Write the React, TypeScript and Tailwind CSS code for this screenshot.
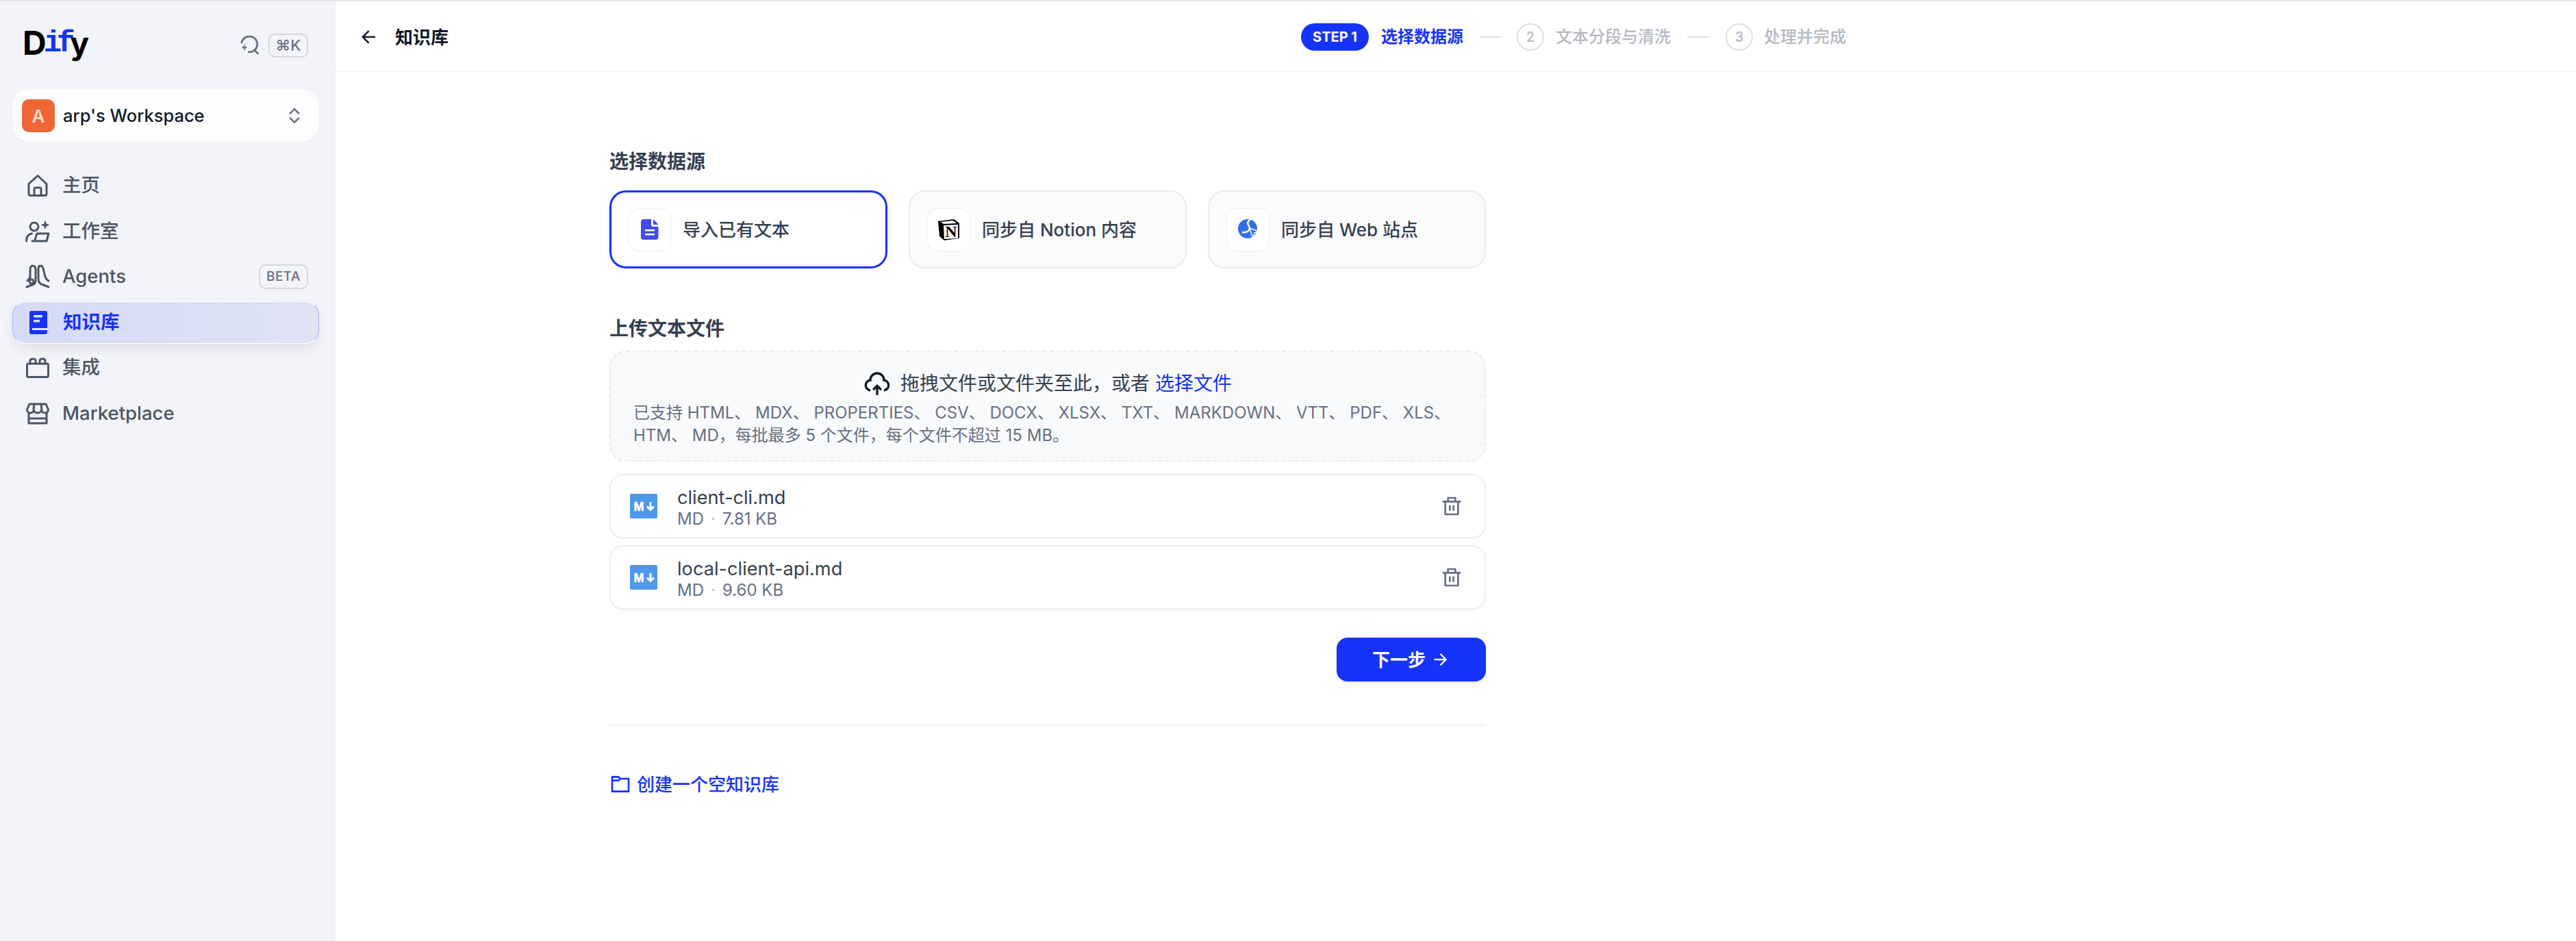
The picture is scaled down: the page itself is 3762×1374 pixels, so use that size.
import React from 'react';
import { RiArrowLeftLine, RiArrowRightLine, RiDeleteBinLine, RiExpandUpDownLine, RiFolder6Line, RiUploadCloud2Line } from 'react-icons/ri';

const HomeIcon = () => (
  <svg width="32" height="34" viewBox="0 0 32 34" fill="none" stroke="#4b5565" strokeWidth="3" strokeLinecap="round" strokeLinejoin="round">
    <path d="M3 14.5 16 2.5l13 12V29a2.5 2.5 0 0 1-2.5 2.5h-21A2.5 2.5 0 0 1 3 29Z" />
    <path d="M11 31V22a2 2 0 0 1 2-2h6a2 2 0 0 1 2 2v9" />
  </svg>
);

const StudioIcon = () => (
  <svg width="36" height="32" viewBox="0 0 36 32" fill="none" stroke="#4b5565" strokeWidth="3" strokeLinecap="round" strokeLinejoin="round">
    <circle cx="13" cy="9" r="6" />
    <path d="M1.5 30c0-6 3-10 8-11" />
    <path d="M10 30h21l3-11H17l-3.5 11" />
    <path d="M29 1l1.5 4 4 1.5-4 1.5-1.5 4-1.5-4-4-1.5 4-1.5Z" fill="#4b5565" strokeWidth="1" />
  </svg>
);

const AgentsIcon = () => (
  <svg width="36" height="36" viewBox="0 0 36 36" fill="none" stroke="#4b5565" strokeWidth="3" strokeLinecap="round" strokeLinejoin="round">
    <path d="M2 33l8-3c3-1 5-3 5-6V8c0-4-2-6-4-6S7 4 7 8v11" />
    <path d="M7 19l-4 5" />
    <circle cx="9" cy="25" r="3" />
    <path d="M34 33l-8-3c-4-1-7-4-7-9V6c0-2 1-4 3-4s3 1 4 4l3 12c1 3 3 5 5 6" />
  </svg>
);

const BookIcon = () => (
  <svg width="28" height="36" viewBox="0 0 28 36">
    <rect x="1" y="1" width="26" height="34" rx="3" fill="#1533fb" />
    <rect x="7" y="7" width="13" height="3.5" rx="1" fill="#dfe4f8" />
    <rect x="7" y="14" width="9" height="3.5" rx="1" fill="#dfe4f8" />
    <rect x="5" y="26" width="22" height="3" fill="#dfe4f8" />
  </svg>
);

const IntegrationsIcon = () => (
  <svg width="34" height="30" viewBox="0 0 34 30" fill="none" stroke="#4b5565" strokeWidth="3" strokeLinecap="round" strokeLinejoin="round">
    <rect x="1.5" y="9" width="31" height="19.5" rx="2" />
    <path d="M6 9V5a3 3 0 0 1 3-3h2a3 3 0 0 1 3 3v4M20 9V5a3 3 0 0 1 3-3h2a3 3 0 0 1 3 3v4" />
  </svg>
);

const MarketplaceIcon = () => (
  <svg width="34" height="32" viewBox="0 0 34 32" fill="none" stroke="#4b5565" strokeWidth="3" strokeLinecap="round" strokeLinejoin="round">
    <path d="M5 2h24l3.5 8c0 3-2.500 5-5 5s-5-2-5-5c0 3-2.500 5-5.500 5s-5.500-2-5.500-5c0 3-2.500 5-5 5s-5-2-5-5Z" />
    <path d="M12 2l-1 8M22 2l1 8" />
    <path d="M4 15v15h26V15M4 23h26" />
  </svg>
);

const SearchBoltIcon = () => (
  <svg width="28" height="28" viewBox="0 0 28 28" fill="none" stroke="#676f83" strokeWidth="2.800" strokeLinecap="round" strokeLinejoin="round">
    <path d="M3 10A11.500 11.500 0 1 1 13.500 24" />
    <path d="M22 21.500l4.500 4.500" />
    <path d="M8 11.500l-5 7h4l-1.500 5 5.500-7.500H7Z" fill="#676f83" stroke="none" />
  </svg>
);

const FileIcon = () => (
  <svg width="26" height="30" viewBox="0 0 26 30">
    <path d="M4 0h11v8a3 3 0 0 0 3 3h7.500v15a4 4 0 0 1-4 4H4a4 4 0 0 1-4-4V4a4 4 0 0 1 4-4Z" fill="#444ce7" />
    <path d="M18 0l7.500 8H18Z" fill="#444ce7" />
    <rect x="6" y="15" width="14" height="2.500" fill="#fff" />
    <rect x="6" y="21" width="14" height="2.500" fill="#fff" />
  </svg>
);

const NotionIcon = () => (
  <svg width="32" height="32" viewBox="0 0 32 32">
    <path d="M0 4l23-3 8 6v22l-22 3-7-6Z" fill="#000" />
    <path d="M8 10l21-1v20L9 30Z" fill="#fff" />
    <path d="M4 5l4 3 19-1-5-4Z" fill="#fff" />
    <text x="19" y="27" textAnchor="middle" fontFamily="'Liberation Serif', serif" fontWeight="700" fontSize="24" fill="#000">N</text>
  </svg>
);

const WebIcon = () => (
  <svg width="30" height="30" viewBox="0 0 30 30">
    <circle cx="14" cy="14" r="14" fill="#316fe8" />
    <path d="M18 0c-3 3-5 5-3 8s3 5 1 8-7 4-10 3" fill="none" stroke="#fff" strokeWidth="2.500" />
    <path d="M17 13l13 5-6 2-2 9Z" fill="#316fe8" stroke="#fff" strokeWidth="1.500" strokeLinejoin="round" />
  </svg>
);

const MdIcon = () => (
  <svg width="40" height="36" viewBox="0 0 40 36">
    <rect width="40" height="36" rx="2" fill="#4f97e8" />
    <text x="13" y="25" textAnchor="middle" fontFamily="'Liberation Sans', sans-serif" fontWeight="700" fontSize="18" fill="#fff" stroke="#fff" strokeWidth="0.7">M</text>
    <path d="M30 12v11M25 18.500l5 5 5-5" fill="none" stroke="#fff" strokeWidth="3" />
  </svg>
);

const navItems = [
  { label: '主页', icon: <HomeIcon /> },
  { label: '工作室', icon: <StudioIcon /> },
  { label: 'Agents', icon: <AgentsIcon />, beta: true },
  { label: '知识库', icon: <BookIcon />, active: true },
  { label: '集成', icon: <IntegrationsIcon /> },
  { label: 'Marketplace', icon: <MarketplaceIcon /> },
];

const sources = [
  { label: '导入已有文本', icon: <FileIcon />, active: true },
  { label: '同步自 Notion 内容', icon: <NotionIcon /> },
  { label: '同步自 Web 站点', icon: <WebIcon /> },
];

const files = [
  { name: 'client-cli.md', size: '7.81 KB' },
  { name: 'local-client-api.md', size: '9.60 KB' },
];

export default function App() {
  return (
    <div className="flex h-[1374px] w-full flex-col overflow-hidden border-t-2 border-[#e4e5ea] bg-white font-['Inter','Noto_Sans_CJK_SC',sans-serif]">
      <div className="flex flex-1">
        {/* Sidebar */}
        <aside className="flex w-[490px] shrink-0 flex-col bg-[#f3f4f9] pt-[43px]">
          <div className="flex h-[42px] items-center justify-between pl-[33px] pr-[40px]">
            <div className="-mt-[6px] flex h-[42px] items-center text-[48px] font-bold leading-none text-black">
              <span className="tracking-[-4px]">D</span>
              <span className="font-['Liberation_Mono',monospace] text-[44px] tracking-[-7px] text-[#1533fb]">if</span>
              <span className="text-[46px]">y</span>
            </div>
            <div className="flex items-center gap-[14px]">
              <SearchBoltIcon />
              <span className="flex h-[35px] w-[58px] items-center justify-center rounded-[9px] border-2 border-[#d5d8df] text-[22px] font-medium text-[#676f83]">⌘K</span>
            </div>
          </div>

          <div className="ml-[18px] mr-[24px] mt-[44px] flex h-[76px] items-center rounded-[24px] bg-[#fdfdfe] pl-[14px] pr-[21px] shadow-[0_1px_3px_rgba(16,24,40,0.04)]">
            <span className="flex h-[48px] w-[48px] items-center justify-center rounded-[10px] bg-[#ef6636] text-[26px] font-semibold text-[#ffd9c9]">A</span>
            <span className="ml-[12px] flex-1 text-[25.500px] font-medium text-[#101828]">arp's Workspace</span>
            <RiExpandUpDownLine size={30} color="#676f83" />
          </div>

          <nav className="ml-[18px] mr-[24px] mt-[33px] flex flex-col gap-[4.500px]">
            {navItems.map((item) => (
              <div
                key={item.label}
                className={
                  item.active
                    ? 'flex h-[62px] items-center rounded-[20px] border-[1.500px] border-l-[#a7b3f5] border-r-[#a7b3f5] border-t-white border-b-white bg-gradient-to-r from-[#d5daf6] to-[#dfe3f4] shadow-[0_8px_16px_rgba(16,24,40,0.08)]'
                    : 'flex h-[62px] items-center'
                }
              >
                <span className="flex w-[73px] justify-center pl-[1px]">{item.icon}</span>
                <span className={item.active ? 'flex-1 text-[27.500px] font-semibold text-[#1533fb]' : 'flex-1 text-[27.500px] font-medium text-[#4b5565]'}>{item.label}</span>
                {item.beta && (
                  <span className="mr-[16px] flex h-[36px] w-[72px] items-center justify-center rounded-[9px] border-2 border-[#d5d8df] text-[19px] font-medium tracking-[0.500px] text-[#676f83]">BETA</span>
                )}
              </div>
            ))}
          </nav>
        </aside>

        {/* Main */}
        <main className="flex flex-1 flex-col">
          <header className="flex h-[103px] shrink-0 items-center border-b-2 border-[#f2f4f7] pt-[3px]">
            <div className="flex w-[1410px] items-center pl-[33px] text-[#101828]">
              <RiArrowLeftLine size={30} />
              <span className="ml-[24px] text-[26px] font-semibold">知识库</span>
            </div>
            <div className="flex items-center text-[24px]">
              <span className="flex h-[40px] w-[99px] items-center justify-center rounded-full bg-[#1533fb] text-[20px] font-bold text-white">STEP 1</span>
              <span className="ml-[18px] font-semibold text-[#1533fb]">选择数据源</span>
              <span className="ml-[24px] h-[2px] w-[32px] bg-[#dcdfe5]" />
              <span className="ml-[22px] flex h-[40px] w-[40px] items-center justify-center rounded-full border-2 border-[#dcdfe5] text-[20px] font-medium text-[#b4b8c2]">2</span>
              <span className="ml-[17px] font-medium text-[#b4b8c2]">文本分段与清洗</span>
              <span className="ml-[24px] h-[2px] w-[32px] bg-[#dcdfe5]" />
              <span className="ml-[24px] flex h-[40px] w-[40px] items-center justify-center rounded-full border-2 border-[#dcdfe5] text-[20px] font-medium text-[#b4b8c2]">3</span>
              <span className="ml-[16px] font-medium text-[#b4b8c2]">处理并完成</span>
            </div>
          </header>

          <div className="ml-[400px] w-[1280px] pt-[113px]">
            <h2 className="text-[28px] font-semibold leading-[36px] text-[#354052]">选择数据源</h2>
            <div className="mt-[24px] flex justify-between">
              {sources.map((s) => (
                <div
                  key={s.label}
                  className={
                    s.active
                      ? 'flex h-[114px] w-[406px] items-center rounded-[24px] border-[3px] border-[#1533fb] bg-white pl-[24px]'
                      : 'flex h-[114px] w-[406px] items-center rounded-[24px] border-2 border-[#e9ebf0] bg-[#fbfbfc] pl-[25px]'
                  }
                >
                  <span className="flex h-[63px] w-[63px] items-center justify-center rounded-[16px] border border-[#eeeff2] bg-white">{s.icon}</span>
                  <span className="ml-[17px] text-[26px] font-medium text-[#354052]">{s.label}</span>
                </div>
              ))}
            </div>

            <h2 className="mt-[70px] text-[28px] font-semibold leading-[36px] text-[#354052]">上传文本文件</h2>
            <div className="mt-[14px] flex h-[162px] flex-col rounded-[24px] border-2 border-dashed border-[#e9ebf0] bg-[#f9fafb] px-[33px] pt-[26px]">
              <div className="flex items-center justify-center text-[28px] leading-[36px] text-[#354052]">
                <RiUploadCloud2Line size={40} color="#101828" />
                <span className="ml-[14px]">拖拽文件或文件夹至此，或者</span>
                <span className="ml-[8px] text-[#1533fb]">选择文件</span>
              </div>
              <p className="mt-[7px] text-[24px] leading-[32.500px] text-[#676f83]">
                已支持 HTML、 MDX、 PROPERTIES、 CSV、 DOCX、 XLSX、 TXT、 MARKDOWN、 VTT、 PDF、 XLS、 HTM、 MD，每批最多 5 个文件，每个文件不超过 15 MB。
              </p>
            </div>

            <div className="mt-[18px] flex flex-col gap-[10px]">
              {files.map((f) => (
                <div key={f.name} className="flex h-[94px] items-center rounded-[20px] border-2 border-[#eff0f3] bg-white pl-[28px] pr-[32px] shadow-[0_1px_2px_rgba(16,24,40,0.05)]">
                  <MdIcon />
                  <div className="ml-[29px] flex-1 pt-[6px]">
                    <div className="text-[27.200px] leading-[32px] text-[#354052]">{f.name}</div>
                    <div className="text-[24px] leading-[30px] text-[#676f83]">
                      MD<span className="mx-[10px] text-[#b4b8c2]">·</span>{f.size}
                    </div>
                  </div>
                  <RiDeleteBinLine size={32} color="#676f83" />
                </div>
              ))}
            </div>

            <div className="mt-[41px] flex justify-end">
              <button className="flex h-[64px] w-[218px] items-center justify-center gap-[8px] rounded-[16px] bg-[#1533fb] text-[26px] font-semibold text-white shadow-[0_2px_4px_rgba(16,24,40,0.15)]">
                下一步
                <RiArrowRightLine size={28} />
              </button>
            </div>

            <div className="mt-[63px] h-[2px] bg-[#f0f1f4]" />

            <div className="mt-[67px] flex h-[36px] items-center text-[26px] font-medium text-[#1533fb]">
              <RiFolder6Line size={32} />
              <span className="ml-[8px]">创建一个空知识库</span>
            </div>
          </div>
        </main>
      </div>
    </div>
  );
}
